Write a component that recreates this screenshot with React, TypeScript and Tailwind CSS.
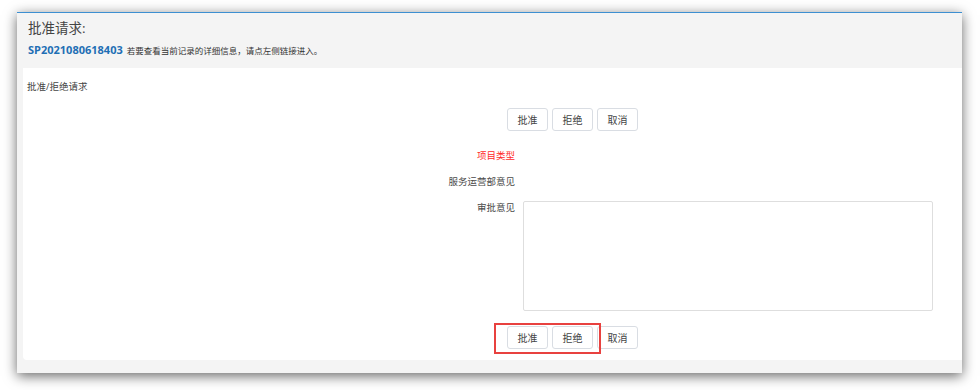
const font = {
  fontFamily: '"Open Sans", "Noto Sans CJK SC", sans-serif',
};

function Btn({ label }: { label: string }) {
  return (
    <button className="w-[41px] h-[23px] rounded-[3px] border border-[#d9dde3] bg-white text-[10px] text-[#444] leading-none">
      {label}
    </button>
  );
}

function ButtonRow({ marked }: { marked?: boolean }) {
  return (
    <div className="relative flex gap-[4px] pl-[484px]">
      <Btn label="批准" />
      <Btn label="拒绝" />
      <Btn label="取消" />
      {marked && (
        <div className="absolute left-[471px] top-[-3px] w-[107px] h-[31px] border-2 border-[#e8413f]" />
      )}
    </div>
  );
}

function FieldRow({
  label,
  red,
  children,
}: {
  label: string;
  red?: boolean;
  children?: React.ReactNode;
}) {
  return (
    <div className="flex">
      <div
        className={`w-[492px] text-right text-[9.5px] leading-[14px] ${red ? "text-[#ff2b2b]" : "text-[#4a4a4a]"}`}
      >
        {label}
      </div>
      {children && <div className="ml-[8px]">{children}</div>}
    </div>
  );
}

export default function App() {
  return (
    <div className="w-[980px] h-[390px] bg-white pt-[12px] pl-[17px]" style={font}>
      <div className="w-[945px] h-[361px] border-t border-[#3d8fd1] bg-[#f4f4f4] shadow-[0_3px_12px_rgba(0,0,0,0.6)] flex flex-col">
        <div className="h-[55px] px-[11px] pt-[5px]">
          <div className="text-[13.5px] leading-[20px] text-[#444]">批准请求:</div>
          <div className="mt-[4px] flex items-baseline gap-[4px] leading-[16px]">
            <span className="text-[11px] font-bold text-[#1f6fb4]">SP2021080618403</span>
            <span className="text-[8.5px] text-[#333]">若要查看当前记录的详细信息，请点左侧链接进入。</span>
          </div>
        </div>
        <div className="ml-[6px] h-[292px] bg-white rounded-bl-[4px] pt-[12px]">
          <div className="pl-[4px] text-[9.5px] leading-[14px] text-[#444]">批准/拒绝请求</div>
          <div className="mt-[14px]">
            <ButtonRow />
          </div>
          <div className="mt-[18px]">
            <FieldRow label="项目类型" red />
          </div>
          <div className="mt-[12px]">
            <FieldRow label="服务运营部意见" />
          </div>
          <div className="mt-[12px]">
            <FieldRow label="审批意见">
              <textarea className="block w-[410px] h-[110px] resize-none rounded-[2px] border border-[#dedede] outline-none" />
            </FieldRow>
          </div>
          <div className="mt-[15px]">
            <ButtonRow marked />
          </div>
        </div>
      </div>
    </div>
  );
}
